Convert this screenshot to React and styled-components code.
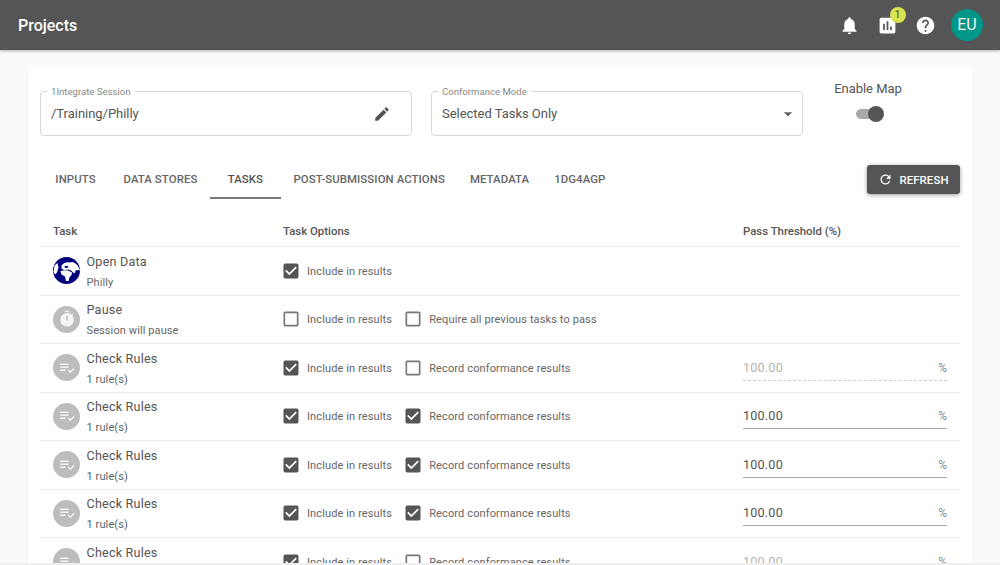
import styled, { createGlobalStyle } from "styled-components";
import {
  MdNotifications,
  MdAssessment,
  MdHelp,
  MdEdit,
  MdRefresh,
  MdTimer,
  MdPlaylistAddCheck,
  MdCheckBox,
  MdCheckBoxOutlineBlank,
  MdArrowDropDown,
} from "react-icons/md";

const GlobalStyle = createGlobalStyle`
  html, body {
    margin: 0;
    height: 565px;
    overflow: hidden;
    background: #fafafa;
    font-family: "Roboto", sans-serif;
    color: #555;
  }
`;

const AppBar = styled.header`
  height: 50px;
  background: #555;
  display: flex;
  align-items: center;
  padding: 0 17px 0 18px;
  box-shadow: 0 1px 3px rgba(0, 0, 0, 0.3);
  color: #fff;
  position: relative;
`;

const Title = styled.div`
  font-size: 16px;
  font-weight: 500;
  flex: 1;
`;

const BarIcon = styled.div`
  width: 38px;
  height: 38px;
  display: flex;
  align-items: center;
  justify-content: center;
  font-size: 21px;
  position: relative;
`;

const Badge = styled.span`
  position: absolute;
  top: 1px;
  left: 21px;
  width: 16px;
  height: 16px;
  border-radius: 50%;
  background: #d9e24f;
  color: #444;
  font-size: 10px;
  line-height: 16px;
  text-align: center;
`;

const Avatar = styled.div`
  width: 32px;
  height: 32px;
  margin-left: 6.5px;
  border-radius: 50%;
  background: #009688;
  color: #f2f2f2;
  font-size: 16px;
  line-height: 32px;
  text-align: center;
`;

const Main = styled.main`
  padding: 17px 27px 0 28px;
`;

const Card = styled.section`
  background: #fff;
  border-radius: 4px;
  box-shadow: 0 1px 3px rgba(0, 0, 0, 0.06);
  padding: 24px 13px 0 12px;
`;

const TopRow = styled.div`
  display: flex;
  gap: 19px;
`;

const Field = styled.div`
  position: relative;
  width: 372px;
  height: 45px;
  box-sizing: border-box;
  border: 1px solid #d6d6d6;
  border-radius: 4px;
  padding: 0 ${(p) => p.$right}px 0 10px;
  display: flex;
  align-items: center;
  justify-content: space-between;
  font-size: 13px;
  letter-spacing: -0.03px;
`;

const FieldLabel = styled.label`
  position: absolute;
  top: -6px;
  left: 6px;
  padding: 0 4px;
  background: #fff;
  font-size: 9.6px;
  line-height: 11px;
  letter-spacing: 0;
  color: #888;
`;

const MapToggle = styled.div`
  width: 92px;
  margin-top: -10px;
  display: flex;
  flex-direction: column;
  align-items: center;
  font-size: 13px;
  letter-spacing: -0.03px;
  line-height: 15px;
`;

const SwitchTrack = styled.div`
  position: relative;
  width: 24px;
  height: 10px;
  margin-top: 13px;
  border-radius: 5px;
  background: #aaa;
`;

const SwitchThumb = styled.span`
  position: absolute;
  top: -3px;
  right: -4px;
  width: 16px;
  height: 16px;
  border-radius: 50%;
  background: #555;
`;

const TabBar = styled.div`
  display: flex;
  align-items: center;
  height: 39px;
  margin-top: 24px;
`;

const Tab = styled.div`
  min-width: 71px;
  height: 39px;
  box-sizing: border-box;
  padding: 0 12.5px;
  display: flex;
  align-items: center;
  justify-content: center;
  font-size: 11.4px;
  font-weight: 500;
  letter-spacing: 0.08px;
  white-space: nowrap;
  color: ${(p) => (p.$active ? "#555" : "#666")};
  border-bottom: 2px solid ${(p) => (p.$active ? "#777" : "transparent")};
`;

const RefreshButton = styled.button`
  margin-left: auto;
  width: 93px;
  height: 29px;
  border: none;
  border-radius: 3px;
  background: #555;
  color: #fff;
  font-family: inherit;
  font-size: 11.4px;
  font-weight: 500;
  letter-spacing: 0.1px;
  display: flex;
  align-items: center;
  justify-content: center;
  gap: 6px;
  box-shadow: 0 1px 4px rgba(0, 0, 0, 0.4);
  svg {
    font-size: 15px;
  }
`;

const Row = styled.div`
  display: grid;
  grid-template-columns: 230px 460px 1fr;
  align-items: center;
  box-sizing: border-box;
  height: 48.5px;
  padding: 0 13px;
  border-bottom: 1px solid #eaeaea;
`;

const HeadRow = styled(Row)`
  height: 48px;
  align-items: end;
  padding-bottom: 8px;
  font-size: 11.4px;
  font-weight: 500;
  line-height: 14px;
  color: #555;
`;

const TaskCell = styled.div`
  display: flex;
  align-items: center;
  gap: 6.5px;
`;

const TaskIcon = styled.div`
  width: 27px;
  height: 27px;
  border-radius: 50%;
  background: #bdbdbd;
  color: #f4f4f4;
  display: flex;
  align-items: center;
  justify-content: center;
  font-size: 18px;
`;

const TaskText = styled.div`
  display: flex;
  flex-direction: column;
  gap: 7px;
  margin-top: 2px;
`;

const TaskName = styled.div`
  font-size: 12.6px;
  letter-spacing: 0.2px;
  line-height: 14px;
`;

const TaskSub = styled.div`
  font-size: 11px;
  letter-spacing: 0.1px;
  line-height: 13px;
  color: ${(p) => (p.$rule ? "#55666a" : "#666")};
`;

const Options = styled.div`
  display: flex;
  align-items: center;
  margin-left: -2.5px;
`;

const Check = styled.label`
  display: flex;
  align-items: center;
  gap: 6.5px;
  margin-right: 10.6px;
  font-size: 11px;
  letter-spacing: 0.12px;
  color: #666;
  svg {
    font-size: 20px;
    color: ${(p) => (p.$checked ? "#555" : "#777")};
  }
`;

const CheckText = styled.span`
  margin-top: 1px;
`;

const Threshold = styled.div`
  width: 204px;
  height: 26px;
  box-sizing: border-box;
  display: flex;
  align-items: center;
  justify-content: space-between;
  font-size: 12.6px;
  letter-spacing: 0.2px;
  color: ${(p) => (p.$disabled ? "#b3b3b3" : "#555")};
  border-bottom: 1px ${(p) => (p.$disabled ? "dashed #ccc" : "solid #aaa")};
`;

const Percent = styled.span`
  font-size: 12px;
  letter-spacing: 0;
  margin-top: 1px;
  color: #8a8a8a;
`;

const BottomEdge = styled.div`
  position: fixed;
  left: 0;
  right: 0;
  bottom: 0;
  height: 2px;
  background: #eee;
`;

const GlobeIcon = () => (
  <svg width="27" height="27" viewBox="0 0 27 27">
    <circle cx="13.5" cy="13.5" r="13.5" fill="#00007f" />
    <path
      fill="#fff"
      d="M8.5 8.5C11 5.5 14 5 16 5.5L20 5C23.5 6.5 26 9.5 27 13.5L23 13L21.5 16.5L19.5 15L18 13.5L15 12.5L11 13L8.5 11.5ZM7.5 14L11.5 13.2L15 13.5L19 15.5L18.5 18L16.5 20.5L15.5 24L13 24L12 19.5L8.5 17.5ZM1.5 8.5L4.5 6L5.5 10.5L4 15.5L2 17.5L0.5 15Z"
    />
    <path fill="#00007f" d="M11 9.5L14.5 8.8L15.5 10.5L12.5 11Z" />
  </svg>
);

const tabs = ["INPUTS", "DATA STORES", "TASKS", "POST-SUBMISSION ACTIONS", "METADATA", "1DG4AGP"];

const tasks = [
  { name: "Open Data", sub: "Philly", kind: "globe", include: true },
  { name: "Pause", sub: "Session will pause", kind: "pause", include: false, second: "Require all previous tasks to pass", secondOn: false },
  { name: "Check Rules", sub: "1 rule(s)", kind: "rules", include: true, second: "Record conformance results", secondOn: false, pass: true },
  { name: "Check Rules", sub: "1 rule(s)", kind: "rules", include: true, second: "Record conformance results", secondOn: true, pass: true },
  { name: "Check Rules", sub: "1 rule(s)", kind: "rules", include: true, second: "Record conformance results", secondOn: true, pass: true },
  { name: "Check Rules", sub: "1 rule(s)", kind: "rules", include: true, second: "Record conformance results", secondOn: true, pass: true },
  { name: "Check Rules", sub: "1 rule(s)", kind: "rules", include: true, second: "Record conformance results", secondOn: false, pass: true },
];

const Checkbox = ({ checked, children }) => (
  <Check $checked={checked}>
    {checked ? <MdCheckBox /> : <MdCheckBoxOutlineBlank />}
    <CheckText>{children}</CheckText>
  </Check>
);

const App = () => {
  return (
    <>
      <GlobalStyle />
      <AppBar>
        <Title>Projects</Title>
        <BarIcon>
          <MdNotifications />
        </BarIcon>
        <BarIcon>
          <MdAssessment />
          <Badge>1</Badge>
        </BarIcon>
        <BarIcon>
          <MdHelp />
        </BarIcon>
        <Avatar>EU</Avatar>
      </AppBar>
      <Main>
        <Card>
          <TopRow>
            <Field $right={20}>
              <FieldLabel>1Integrate Session</FieldLabel>
              /Training/Philly
              <MdEdit size={18} color="#555" />
            </Field>
            <Field $right={4}>
              <FieldLabel>Conformance Mode</FieldLabel>
              Selected Tasks Only
              <MdArrowDropDown size={20} color="#666" />
            </Field>
            <MapToggle>
              Enable Map
              <SwitchTrack>
                <SwitchThumb />
              </SwitchTrack>
            </MapToggle>
          </TopRow>
          <TabBar>
            {tabs.map((t) => (
              <Tab key={t} $active={t === "TASKS"}>
                {t}
              </Tab>
            ))}
            <RefreshButton>
              <MdRefresh />
              REFRESH
            </RefreshButton>
          </TabBar>
          <HeadRow>
            <div>Task</div>
            <div>Task Options</div>
            <div>Pass Threshold (%)</div>
          </HeadRow>
          {tasks.map((task, i) => (
            <Row key={i}>
              <TaskCell>
                {task.kind === "globe" ? (
                  <GlobeIcon />
                ) : (
                  <TaskIcon>{task.kind === "pause" ? <MdTimer /> : <MdPlaylistAddCheck />}</TaskIcon>
                )}
                <TaskText>
                  <TaskName>{task.name}</TaskName>
                  <TaskSub $rule={task.kind === "rules"}>{task.sub}</TaskSub>
                </TaskText>
              </TaskCell>
              <Options>
                <Checkbox checked={task.include}>Include in results</Checkbox>
                {task.second && <Checkbox checked={task.secondOn}>{task.second}</Checkbox>}
              </Options>
              {task.pass && (
                <Threshold $disabled={!task.secondOn}>
                  100.00
                  <Percent>%</Percent>
                </Threshold>
              )}
            </Row>
          ))}
        </Card>
      </Main>
      <BottomEdge />
    </>
  );
};

export default App;
